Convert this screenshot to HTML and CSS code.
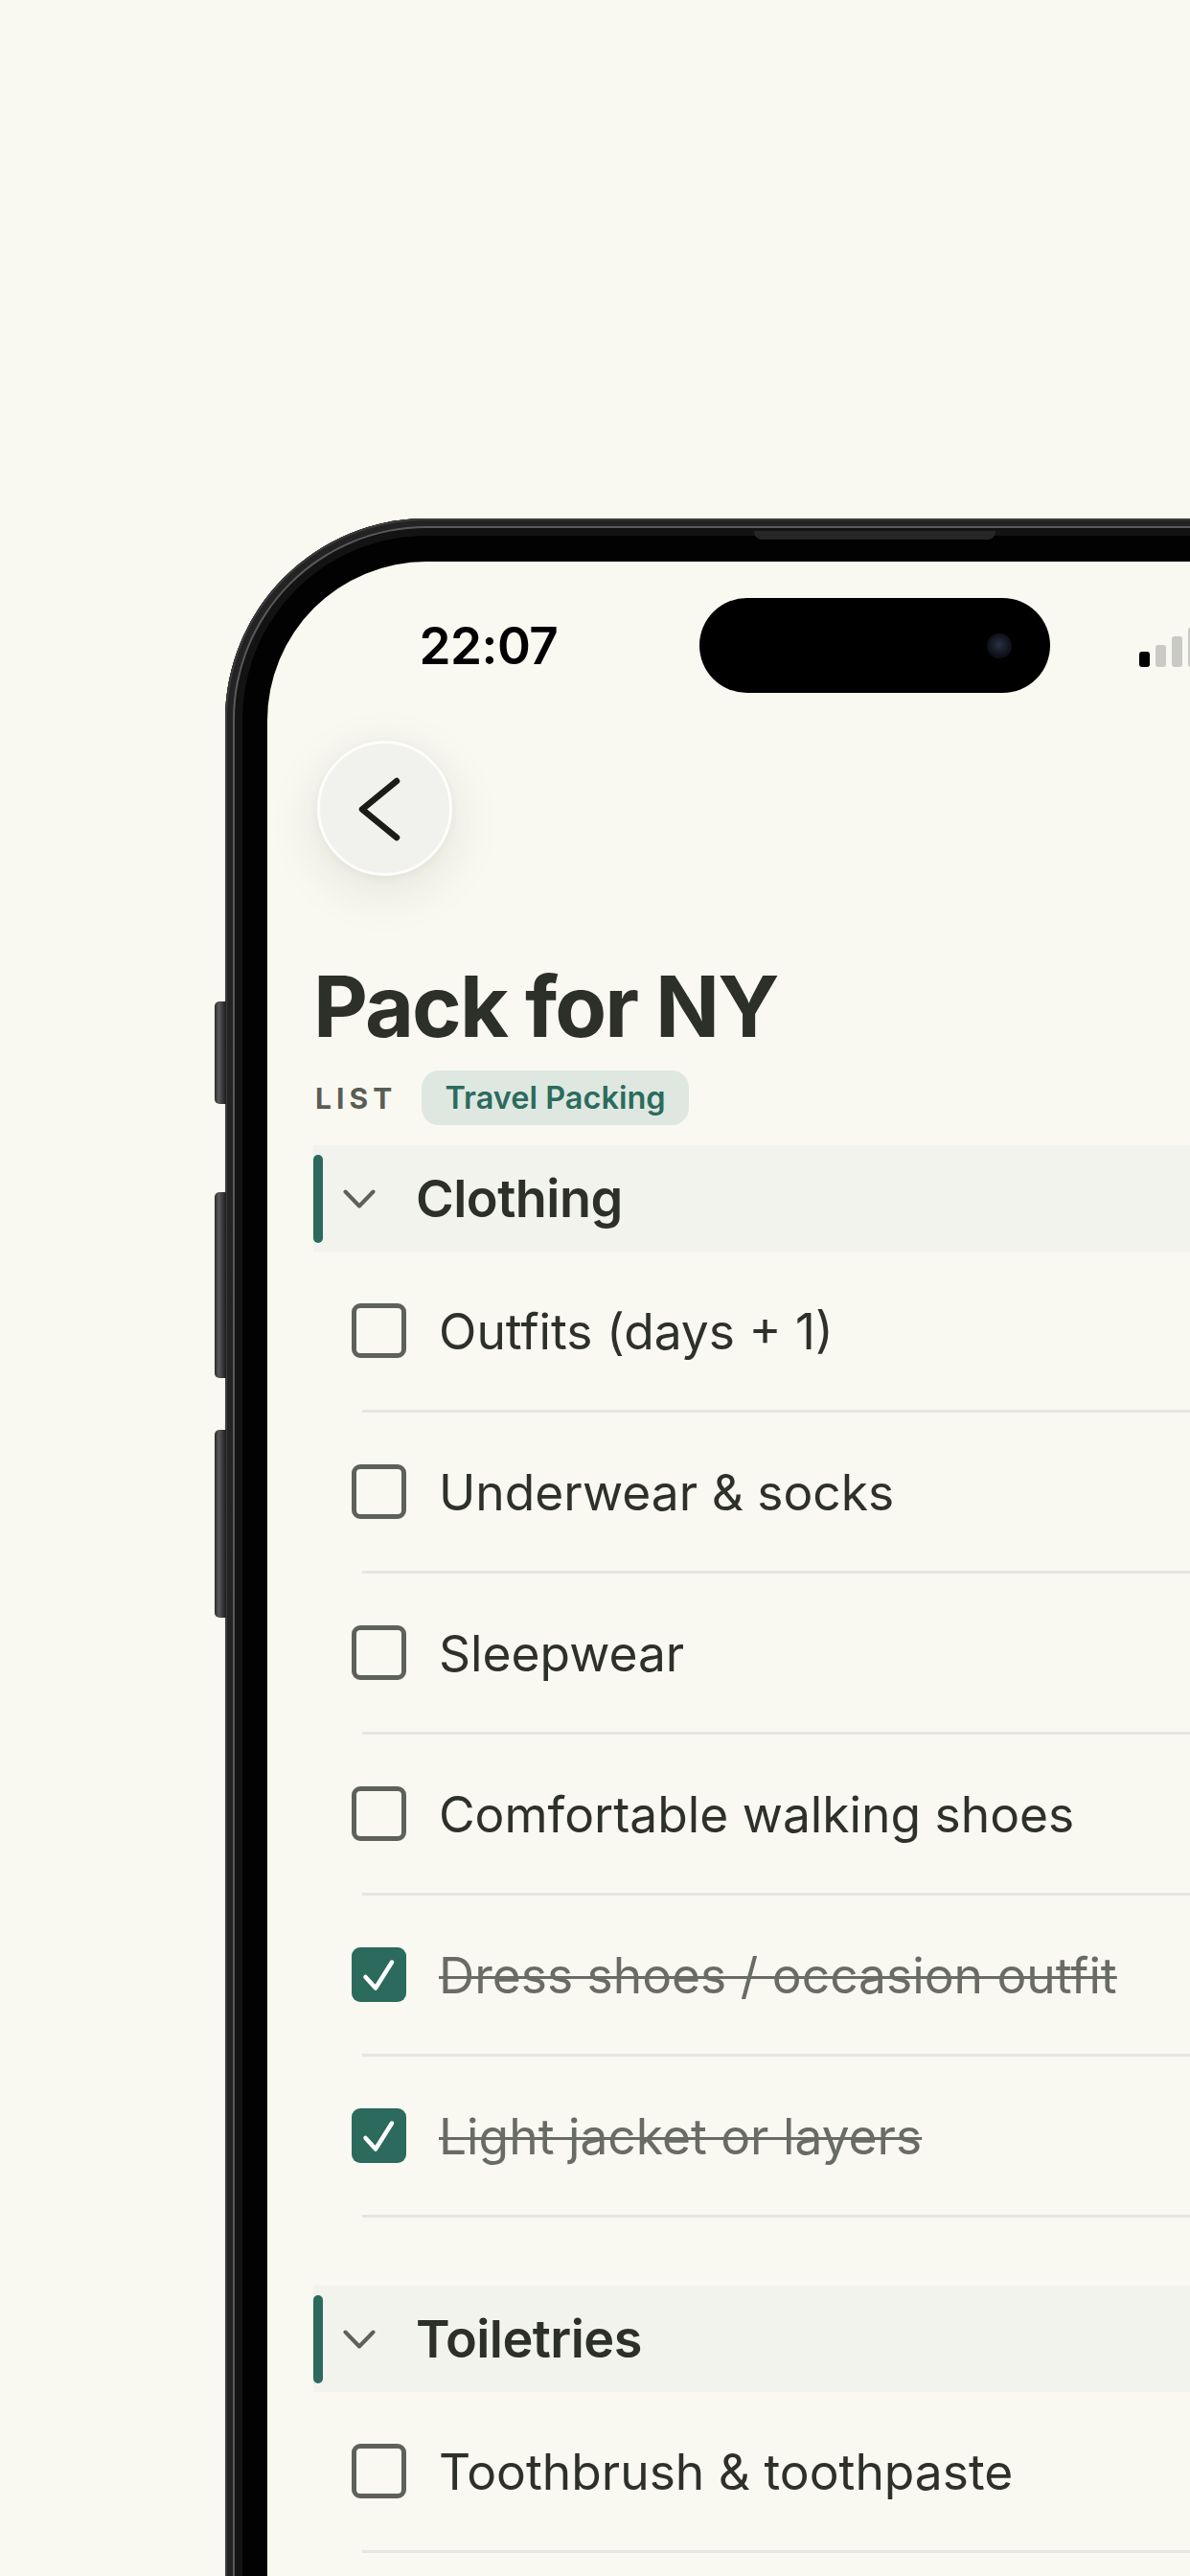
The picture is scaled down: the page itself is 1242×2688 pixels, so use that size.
FILE: index.html
```html
<!DOCTYPE html>
<html lang="en">
<head>
<meta charset="utf-8">
<title>Pack for NY</title>
<link rel="stylesheet" href="styles.css">
</head>
<body>
<div class="stage">
  <div class="phone">
    <span class="side-btn side-btn-1"></span>
    <span class="side-btn side-btn-2"></span>
    <span class="side-btn side-btn-3"></span>
    <span class="speaker"></span>
    <div class="screen">
      <div class="status">
        <span class="time">22:07</span>
        <span class="island"><span class="lens"></span></span>
        <span class="signal">
          <span class="bar bar-1"></span>
          <span class="bar bar-2"></span>
          <span class="bar bar-3"></span>
          <span class="bar bar-4"></span>
        </span>
      </div>
      <main class="content">
        <button class="back" aria-label="Back">
          <svg width="135" height="135" viewBox="0 0 135 135"><polyline points="80,39 44,68.5 80,98" fill="none" stroke="#1b1c19" stroke-width="6.5" stroke-linecap="round" stroke-linejoin="round"/></svg>
        </button>
        <h1 class="title">Pack for NY</h1>
        <div class="meta">
          <span class="label">LIST</span>
          <span class="chip">Travel Packing</span>
        </div>

        <section class="group">
          <div class="group-head">
            <span class="accent"></span>
            <svg class="caret" width="34" height="20" viewBox="0 0 34 20"><polyline points="2.5,2.5 17,17.5 31.5,2.5" fill="none" stroke="#5e6159" stroke-width="4" stroke-linecap="round" stroke-linejoin="round"/></svg>
            <h2 class="group-title">Clothing</h2>
          </div>
          <ul class="items">
            <li class="item"><span class="box"></span><span class="item-text">Outfits (days + 1)</span></li>
            <li class="item"><span class="box"></span><span class="item-text">Underwear &amp; socks</span></li>
            <li class="item"><span class="box"></span><span class="item-text">Sleepwear</span></li>
            <li class="item"><span class="box"></span><span class="item-text">Comfortable walking shoes</span></li>
            <li class="item done"><span class="box"><svg width="57" height="57" viewBox="0 0 57 57"><polyline points="14.5,31 25,42.5 42,15.5" fill="none" stroke="#ffffff" stroke-width="4.5" stroke-linecap="round" stroke-linejoin="round"/></svg></span><span class="item-text">Dress shoes / occasion outfit</span></li>
            <li class="item done"><span class="box"><svg width="57" height="57" viewBox="0 0 57 57"><polyline points="14.5,31 25,42.5 42,15.5" fill="none" stroke="#ffffff" stroke-width="4.5" stroke-linecap="round" stroke-linejoin="round"/></svg></span><span class="item-text">Light jacket or layers</span></li>
          </ul>
        </section>

        <section class="group">
          <div class="group-head">
            <span class="accent"></span>
            <svg class="caret" width="34" height="20" viewBox="0 0 34 20"><polyline points="2.5,2.5 17,17.5 31.5,2.5" fill="none" stroke="#5e6159" stroke-width="4" stroke-linecap="round" stroke-linejoin="round"/></svg>
            <h2 class="group-title">Toiletries</h2>
          </div>
          <ul class="items">
            <li class="item"><span class="box"></span><span class="item-text">Toothbrush &amp; toothpaste</span></li>
          </ul>
        </section>
      </main>
    </div>
  </div>
</div>
</body>
</html>
```

FILE: styles.css
```css
html, body {
  margin: 0;
  padding: 0;
}

body {
  background: #f9f8f1;
  font-family: Inter, "Noto Sans", "Liberation Sans", sans-serif;
  height: 2688px;
  overflow: hidden;
}

.stage {
  box-sizing: border-box;
  height: 2688px;
  padding: 541px 0 0 235px;
  overflow: hidden;
}

.phone {
  position: relative;
  box-sizing: border-box;
  width: 1356px;
  height: 2500px;
  padding: 45px 44px;
  border-radius: 210px;
  background: #020202;
  box-shadow:
    inset 0 0 0 2px #3c3c3c,
    inset 0 0 0 8px #232323,
    inset 0 0 0 10px #5a5a5a,
    inset 0 0 0 18px #131313;
}

.side-btn {
  position: absolute;
  left: -11px;
  width: 12px;
  border-radius: 5px 0 0 5px;
  background: linear-gradient(90deg, #2a2a2a 0%, #5a5a5a 35%, #1c1c1c 100%);
}

.side-btn-1 { top: 504px; height: 107px; }
.side-btn-2 { top: 703px; height: 194px; }
.side-btn-3 { top: 951px; height: 196px; }

.speaker {
  position: absolute;
  left: 552px;
  top: 13px;
  width: 252px;
  height: 9px;
  border-radius: 0 0 8px 8px;
  background: #262626;
}

.screen {
  height: 100%;
  background: #f9f8f1;
  border-radius: 166px;
  overflow: hidden;
}

/* status bar */
.status {
  display: grid;
  grid-template-columns: 451px 366px 1fr;
  align-items: center;
  height: 99px;
  margin-top: 38px;
}

.time {
  justify-self: center;
  padding-left: 11px;
  font-size: 53px;
  font-weight: 600;
  color: #000;
  letter-spacing: -0.01em;
}

.island {
  display: flex;
  align-items: center;
  justify-content: flex-end;
  height: 99px;
  border-radius: 50px;
  background: #000;
  padding-right: 40px;
  box-sizing: border-box;
}

.lens {
  width: 26px;
  height: 26px;
  border-radius: 50%;
  background: radial-gradient(circle at 50% 45%, #2a3145 0%, #11141d 55%, #050608 100%);
}

.signal {
  display: flex;
  align-items: flex-end;
  gap: 6px;
  height: 44px;
  margin-left: 93px;
  align-self: center;
}

.bar {
  width: 11px;
  border-radius: 3px;
  background: #c9c9c5;
}

.bar-1 { height: 16px; background: #000; }
.bar-2 { height: 23px; }
.bar-3 { height: 32px; }
.bar-4 { height: 41px; }

/* content */
.content {
  padding-left: 48px;
}

.back {
  display: block;
  box-sizing: border-box;
  width: 141px;
  height: 141px;
  margin: 50px 0 0 4px;
  padding: 0;
  border: 3px solid #fdfdfb;
  border-radius: 50%;
  background: #f1f1ee;
  box-shadow: 0 14px 54px rgba(60, 60, 40, 0.11), 0 2px 8px rgba(60, 60, 40, 0.05);
}

.back svg {
  display: block;
}

.title {
  margin: 92px 0 0;
  font-size: 88px;
  line-height: 1;
  font-weight: 700;
  color: #2d3029;
  letter-spacing: -0.022em;
}

.meta {
  display: flex;
  align-items: center;
  gap: 26px;
  margin-top: 23px;
}

.label {
  font-size: 30px;
  font-weight: 700;
  letter-spacing: 0.17em;
  color: #5a5d55;
  padding-left: 2px;
}

.chip {
  display: flex;
  align-items: center;
  height: 57px;
  padding: 0 24px;
  border-radius: 18px;
  background: #dee8e1;
  color: #2c6b5d;
  font-size: 32.5px;
  font-weight: 600;
}

.group {
  margin-top: 71px;
}

.meta + .group {
  margin-top: 21px;
}

.group-head {
  display: flex;
  align-items: center;
  height: 111px;
  background: #f2f3ed;
}

.accent {
  width: 10px;
  height: 92px;
  border-radius: 5px;
  background: #2b6a5c;
}

.caret {
  display: block;
  margin-left: 21px;
}

.group-title {
  margin: 0 0 0 42px;
  font-size: 54px;
  font-weight: 600;
  color: #2d3029;
  letter-spacing: -0.01em;
}

.items {
  list-style: none;
  margin: 0;
  padding: 0;
}

.item {
  display: flex;
  align-items: center;
  height: 165px;
  margin-left: 51px;
  border-bottom: 3px solid #e6e6e1;
}

.box {
  box-sizing: border-box;
  flex: none;
  width: 57px;
  height: 57px;
  margin-left: -11px;
  border: 5px solid #5e6159;
  border-radius: 9px;
}

.done .box {
  border: none;
  background: #2b6a5c;
}

.box svg {
  display: block;
}

.item-text {
  margin-left: 34px;
  font-size: 51.5px;
  font-weight: 400;
  color: #2e3129;
}

.done .item-text {
  color: #696c64;
  text-decoration: line-through;
  text-decoration-thickness: 3px;
}
```
